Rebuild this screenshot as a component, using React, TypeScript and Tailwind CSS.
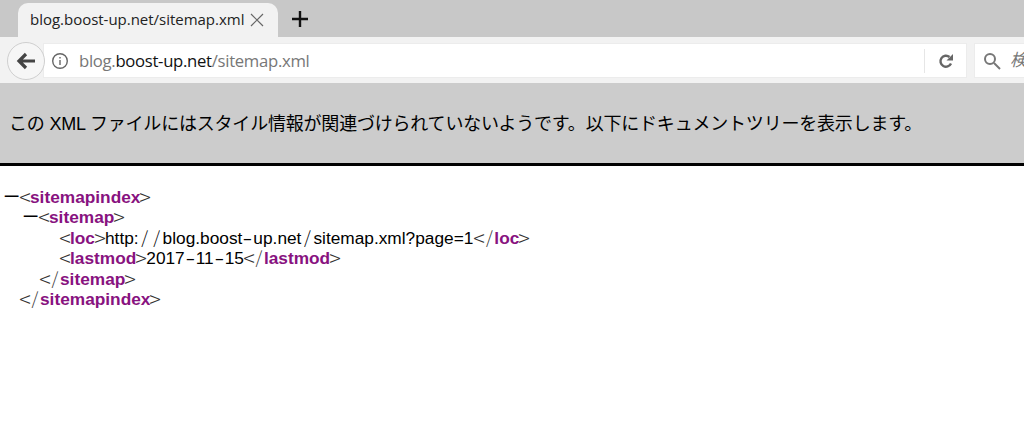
const W = ({ text }: { text: string }) => (
  <>
    {text.split(/([/-])/).map((part, i) =>
      part === "/" ? (
        <span key={i} className="inline-block w-[12px] text-center font-['Noto_Sans_CJK_JP',sans-serif] leading-none font-light">/</span>
      ) : part === "-" ? (
        <span key={i} className="inline-block w-[11px] text-center leading-none scale-x-[1.7]">-</span>
      ) : (
        <span key={i}>{part}</span>
      )
    )}
  </>
);
const P = ({ children }: { children: string }) => (
  <span className="inline-block w-[10px] text-center text-[#333] leading-none font-light scale-[1.25] font-['Noto_Sans_CJK_JP',sans-serif]">{children}</span>
);
const S = () => (
  <span className="inline-block w-[10px] text-center text-[#333] leading-none font-light font-['Noto_Sans_CJK_JP',sans-serif]">/</span>
);
const T = ({ children }: { children: string }) => <b className="text-[#881280] font-bold">{children}</b>;
const Row = ({ pl, children }: { pl: string; children: React.ReactNode }) => (
  <div className={`h-[20.4px] leading-[20.4px] ${pl}`}>{children}</div>
);
const Dash = () => <span className="inline-block w-[17px] leading-none font-['Noto_Sans_CJK_JP',sans-serif]">ー</span>;

export default function App() {
  return (
    <div className="w-[1024px] h-[439px] overflow-hidden bg-white font-['Liberation_Sans','Noto_Sans_CJK_JP',sans-serif] text-black">
      <div className="h-[37px] bg-[#c8c8c8] pt-[3px] pl-[18px] flex items-start gap-[13px]">
        <div className="w-[260px] h-[34px] bg-[#f2f2f2] rounded-t-[10px] flex items-center pl-[12px] pr-[14px] pb-[1px] justify-between">
          <span className="text-[15px] text-[#222] whitespace-nowrap font-['Open_Sans',sans-serif] tracking-[-0.02px]">blog.boost-up.net/sitemap.xml</span>
          <svg width="14" height="14" viewBox="0 0 14 14" stroke="#666" strokeWidth="1.2" fill="none"><path d="M1 1l12 12M13 1L1 13" /></svg>
        </div>
        <svg className="mt-[7px]" width="18" height="18" viewBox="0 0 18 18" stroke="#111" strokeWidth="2.4" fill="none"><path d="M9 1v16M1 9h16" /></svg>
      </div>
      <div className="h-[46px] bg-[#f2f2f2] flex items-center pl-[7px] pt-[1px] overflow-hidden">
        <div className="w-[38px] h-[38px] shrink-0 rounded-full border border-[#cfcfcf] bg-[#f6f6f6] flex items-center justify-center z-10">
          <svg width="20" height="18" viewBox="0 0 20 18" fill="none" stroke="#444" strokeWidth="3.2"><path d="M19 9H4M10 2L3 9l7 7" /></svg>
        </div>
        <div className="w-[922px] shrink-0 h-[33px] bg-white flex items-center pl-[7px] ml-[-1px] shadow-[0_0_0_1px_#ececec]">
          <svg width="18" height="18" viewBox="0 0 18 18" fill="none" stroke="#666" strokeWidth="1.4"><circle cx="9" cy="9" r="7.3" /><path d="M9 8v5M9 5v1.6" /></svg>
          <span className="ml-[10px] text-[16.7px] text-[#777] font-['Open_Sans',sans-serif] tracking-[-0.3px] whitespace-nowrap">blog.<span className="text-[#111]">boost-up.net</span>/sitemap.xml</span>
          <div className="ml-auto w-[1px] h-[24px] bg-[#e6e6e6]" />
          <div className="w-[41px] flex justify-center">
            <svg width="16" height="16" viewBox="0 0 16 16" fill="none" stroke="#666" strokeWidth="2.4"><path d="M13 10.5A5.5 5.5 0 1 1 11.5 4" /><path d="M15 1v6.5H8.5z" fill="#666" stroke="none" /></svg>
          </div>
        </div>
        <div className="ml-[9px] w-[60px] shrink-0 h-[33px] bg-white flex items-center pl-[8px] shadow-[0_0_0_1px_#ececec]">
          <svg className="shrink-0" width="18" height="18" viewBox="0 0 18 18" fill="none" stroke="#777" strokeWidth="2"><circle cx="7" cy="7" r="5" /><path d="M11 11l6 6" /></svg>
          <span className="ml-[9px] text-[17px] italic text-[#777] whitespace-nowrap">検索</span>
        </div>
      </div>
      <div className="h-[83px] bg-[#cccccc] border-b-[3px] border-black flex items-center pl-[9px] pt-[3px]">
        <span className="text-[18px] whitespace-nowrap text-black tracking-[-0.2px]">この XML ファイルにはスタイル情報が関連づけられていないようです。以下にドキュメントツリーを表示します。</span>
      </div>
      <div className="pt-[21px] text-[17.3px] whitespace-nowrap font-['Liberation_Sans',sans-serif]">
        <Row pl="pl-[3px]"><Dash /><P>&lt;</P><T>sitemapindex</T><P>&gt;</P></Row>
        <Row pl="pl-[22px]"><Dash /><P>&lt;</P><T>sitemap</T><P>&gt;</P></Row>
        <Row pl="pl-[60px]"><P>&lt;</P><T>loc</T><P>&gt;</P><W text="http://blog.boost-up.net/sitemap.xml?page=1" /><span className="ml-[1px]"><P>&lt;</P><S /></span><T>loc</T><P>&gt;</P></Row>
        <Row pl="pl-[60px]"><P>&lt;</P><T>lastmod</T><P>&gt;</P><W text="2017-11-15" /><P>&lt;</P><S /><T>lastmod</T><P>&gt;</P></Row>
        <Row pl="pl-[40px]"><P>&lt;</P><S /><T>sitemap</T><P>&gt;</P></Row>
        <Row pl="pl-[20px]"><P>&lt;</P><S /><T>sitemapindex</T><P>&gt;</P></Row>
      </div>
    </div>
  );
}
